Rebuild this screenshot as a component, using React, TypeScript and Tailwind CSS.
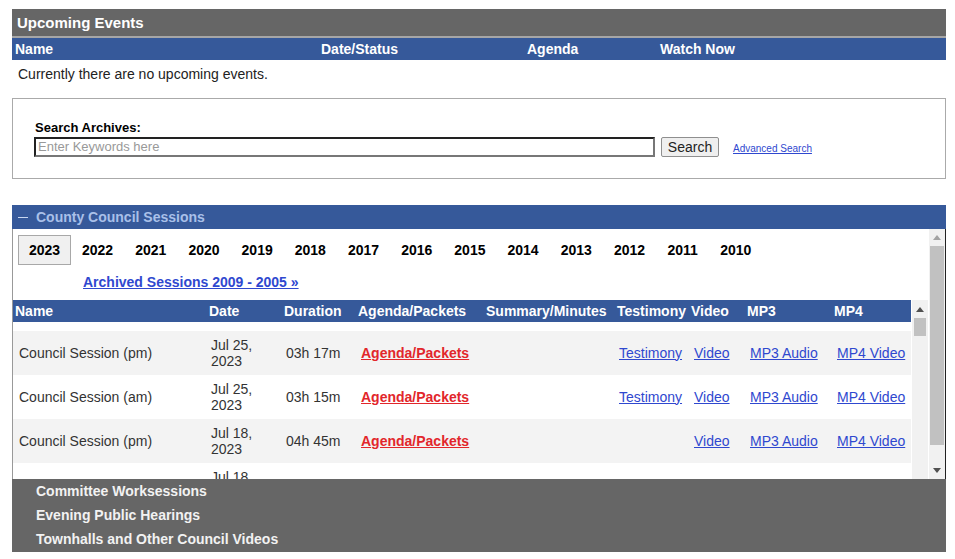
import React from 'react';

const blue = 'bg-[#36599a]';

const years = ['2023', '2022', '2021', '2020', '2019', '2018', '2017', '2016', '2015', '2014', '2013', '2012', '2011', '2010'];

type Session = {
  name: string;
  date: string;
  year: string;
  duration: string;
  testimony: boolean;
};

const sessions: Session[] = [
  { name: 'Council Session (pm)', date: 'Jul 25,', year: '2023', duration: '03h 17m', testimony: true },
  { name: 'Council Session (am)', date: 'Jul 25,', year: '2023', duration: '03h 15m', testimony: true },
  { name: 'Council Session (pm)', date: 'Jul 18,', year: '2023', duration: '04h 45m', testimony: false },
  { name: 'Council Session (am)', date: 'Jul 18,', year: '2023', duration: '03h 02m', testimony: true },
];

const cols = 'grid grid-cols-[194px_75px_74px_128px_131px_74px_56px_87px_79px]';

function Arrow({ up, color }: { up: boolean; color: string }) {
  return (
    <svg width="8" height="5" viewBox="0 0 8 5">
      <polygon points={up ? '0,5 8,5 4,0' : '0,0 8,0 4,5'} fill={color} />
    </svg>
  );
}

function Link({ children }: { children: React.ReactNode }) {
  return <a className="text-[#2f48cf] underline cursor-pointer">{children}</a>;
}

export default function App() {
  return (
    <div className="w-[955px] h-[559px] overflow-hidden bg-white font-['Liberation_Sans',Arial,sans-serif]">
      <div className="ml-[12px] w-[934px] pt-[9px]">
        {/* Upcoming events */}
        <div className="h-[27px] bg-[#666666] flex items-center pl-[5px] pt-[1px] text-white font-bold text-[15px]">
          Upcoming Events
        </div>
        <div className="h-[2px] bg-[#a6a6a6]" />
        <div className={`h-[22px] ${blue} flex items-center text-white font-bold text-[14px]`}>
          <div className="w-[309px] pl-[3px]">Name</div>
          <div className="w-[206px]">Date/Status</div>
          <div className="w-[133px]">Agenda</div>
          <div>Watch Now</div>
        </div>
        <div className="h-[28px] flex items-center pl-[6px] text-[14px] text-[#222]">
          Currently there are no upcoming events.
        </div>

        {/* Search */}
        <div className="mt-[10px] h-[81px] border border-[#aaaaaa] pt-[21px] pl-[21px]">
          <div className="h-[16px] leading-[16px] pl-[1px] font-bold text-[13px] text-black">Search Archives:</div>
          <div className="mt-[1px] flex items-center">
            <div className="w-[621px] h-[20px] border-2 border-t-[#222] border-l-[#222] border-b-[#777] border-r-[#777] flex items-center pl-[2px] text-[13px] text-[#999]">
              Enter Keywords here
            </div>
            <button className="ml-[6px] w-[58px] h-[20px] bg-[#efefef] border border-[#8f8f8f] rounded-[2px] text-[14px] text-[#222] leading-none">
              Search
            </button>
            <a className="ml-[14px] mt-[2px] text-[10px] text-[#2f48cf] underline">Advanced Search</a>
          </div>
        </div>

        {/* County Council Sessions */}
        <div className={`mt-[26px] h-[24px] ${blue} flex items-center pl-[6px] font-bold text-[14px] text-[#a9c0e9]`}>
          <span className="w-[10px] h-[1px] mr-[8px] bg-[#c9d7f0]" />
          <span>County Council Sessions</span>
        </div>
        <div className="h-[250px] flex border-l border-l-[#999] border-r border-r-[#222]">
          <div className="w-[916px] overflow-hidden">
            <div className="pt-[6px] pl-[5px] flex">
              {years.map((y, i) => (
                <div
                  key={y}
                  className={`h-[30px] flex items-center justify-center font-bold text-[14px] text-black ${
                    i === 0 ? 'w-[53px] bg-[#f0f0f0] border border-[#a8a8a8]' : 'w-[53.2px]'
                  }`}
                >
                  {y}
                </div>
              ))}
            </div>
            <div className="h-[35px] flex items-center pl-[70px]">
              <a className="font-bold text-[14px] text-[#2f48cf] underline">Archived Sessions 2009 - 2005 »</a>
            </div>
            <div className="h-[179px] flex">
              <div className="w-[898px] overflow-hidden">
                <div className={`${cols} h-[22px] ${blue} items-center text-white font-bold text-[14px] whitespace-nowrap`}>
                  {['Name', 'Date', 'Duration', 'Agenda/Packets', 'Summary/Minutes', 'Testimony', 'Video', 'MP3', 'MP4'].map((h) => (
                    <div key={h} className="pl-[2px]">{h}</div>
                  ))}
                </div>
                <div className="h-[9px]" />
                {sessions.map((s, i) => (
                  <div
                    key={i}
                    className={`${cols} h-[44px] items-center text-[14px] text-[#333] whitespace-nowrap ${
                      i % 2 === 0 ? 'bg-[#f3f3f3]' : 'bg-white'
                    }`}
                  >
                    <div className="pl-[6px]">{s.name}</div>
                    <div className="pl-[4px] leading-[16px]">
                      <div>{s.date}</div>
                      <div>{s.year}</div>
                    </div>
                    <div className="pl-[4px]">{s.duration}</div>
                    <div className="pl-[5px]">
                      <a className="font-bold text-[#e2262b] underline">Agenda/Packets</a>
                    </div>
                    <div />
                    <div className="pl-[4px]">{s.testimony && <Link>Testimony</Link>}</div>
                    <div className="pl-[5px]"><Link>Video</Link></div>
                    <div className="pl-[5px]"><Link>MP3 Audio</Link></div>
                    <div className="pl-[5px]"><Link>MP4 Video</Link></div>
                  </div>
                ))}
              </div>
              {/* inner scrollbar */}
              <div className="w-[18px] pl-[1px] pr-[1px]">
                <div className="h-full bg-[#f1f1f1] flex flex-col">
                  <div className="h-[18px] flex items-center justify-center">
                    <Arrow up color="#505050" />
                  </div>
                  <div className="h-[18px] mx-[2px] bg-[#c1c1c1]" />
                </div>
              </div>
            </div>
          </div>
          {/* outer scrollbar */}
          <div className="w-[16px] bg-[#f1f1f1] flex flex-col">
            <div className="h-[17px] flex items-center justify-center">
              <Arrow up color="#a3a3a3" />
            </div>
            <div className="h-[199px] mx-[1px] bg-[#c1c1c1]" />
            <div className="flex-1" />
            <div className="h-[17px] flex items-center justify-center">
              <Arrow up={false} color="#505050" />
            </div>
          </div>
        </div>

        {/* Other categories */}
        <div className="h-[73px] bg-[#666666] pl-[24px] text-[14px] font-bold text-[#f2f2f2]">
          <div className="h-[24px] flex items-center">Committee Worksessions</div>
          <div className="h-[24px] flex items-center">Evening Public Hearings</div>
          <div className="h-[24px] flex items-center">Townhalls and Other Council Videos</div>
        </div>
      </div>
    </div>
  );
}
